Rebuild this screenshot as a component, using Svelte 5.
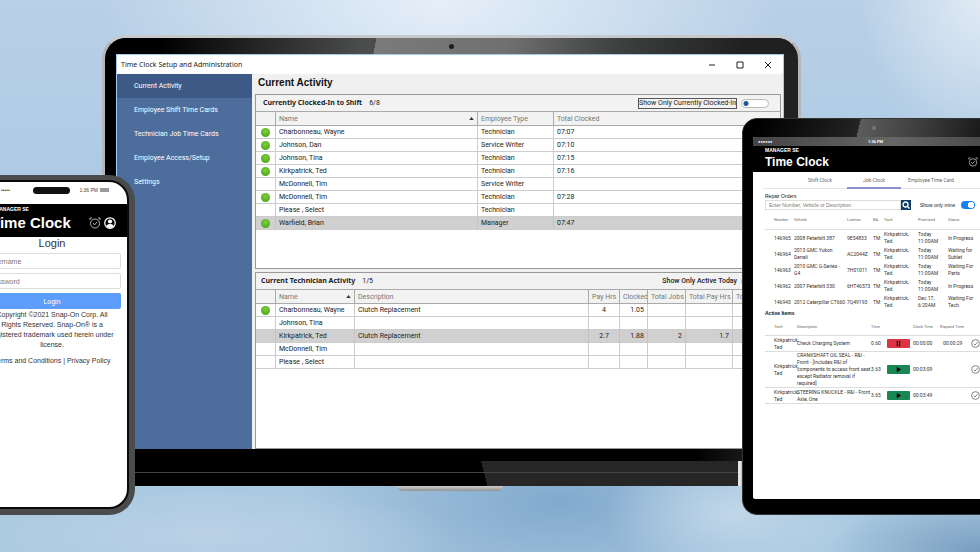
<script>
  const menu = ['Current Activity', 'Employee Shift Time Cards', 'Technician Job Time Cards', 'Employee Access/Setup', 'Settings'];

  const shift = [
    { on: true, name: 'Charbonneau, Wayne', type: 'Technician', total: '07:07' },
    { on: true, name: 'Johnson, Dan', type: 'Service Writer', total: '07:10' },
    { on: true, name: 'Johnson, Tina', type: 'Technician', total: '07:15' },
    { on: true, name: 'Kirkpatrick, Ted', type: 'Technician', total: '07:16' },
    { on: false, name: 'McDonnell, Tim', type: 'Service Writer', total: '' },
    { on: true, name: 'McDonnell, Tim', type: 'Technician', total: '07:28' },
    { on: false, name: 'Please , Select', type: 'Technician', total: '' },
    { on: true, name: 'Warfield, Brian', type: 'Manager', total: '07:47', selected: true }
  ];

  const jobs = [
    { on: true, name: 'Charbonneau, Wayne', desc: 'Clutch Replacement', pay: '4', clocked: '1.05', jobs: '', totalPay: '' },
    { name: 'Johnson, Tina', desc: '', pay: '', clocked: '', jobs: '', totalPay: '' },
    { name: 'Kirkpatrick, Ted', desc: 'Clutch Replacement', pay: '2.7', clocked: '1.88', jobs: '2', totalPay: '1.7', selected: true },
    { name: 'McDonnell, Tim', desc: '', pay: '', clocked: '', jobs: '', totalPay: '' },
    { name: 'Please , Select', desc: '', pay: '', clocked: '', jobs: '', totalPay: '' }
  ];

  const orders = [
    ['146965', ['2008 Peterbilt 387'], '9E54833', ['Today', '11:00AM'], ['In Progress']],
    ['146964', ['2013 GMC Yukon', 'Denali'], 'AC2044Z', ['Today', '11:00AM'], ['Waiting for', 'Sublet']],
    ['146963', ['2010 GMC G-Series -', 'G4'], '7H01011', ['Today', '11:00AM'], ['Waiting For', 'Parts']],
    ['146962', ['2007 Peterbilt 330'], '6HT46573', ['Today', '11:00AM'], ['In Progress']],
    ['146943', ['2012 Caterpillar CT660'], '7Q49193', ['Dec 17,', '6:20AM'], ['Waiting For', 'Tech.']]
  ];

  const items = [
    { desc: ['Check Charging System'], time: '0.60', running: true, clock: '00:00:00', elapsed: '00:00:29' },
    {
      desc: ['CRANKSHAFT OIL SEAL - R&I -', 'Front - [Includes R&I of', 'components to access front seat', 'except Radiator removal if', 'required]'],
      time: '3.63', running: false, clock: '00:03:09', elapsed: ''
    },
    { desc: ['STEERING KNUCKLE - R&I - Front', 'Axle, One'], time: '3.65', running: false, clock: '00:03:49', elapsed: '' }
  ];
</script>

{#snippet lines(list)}
  {#each list as line}<span class="line">{line}</span>{/each}
{/snippet}

{#snippet alarm()}
  <svg class="icon" viewBox="0 0 24 24" fill="none" stroke="#b5b5b5" stroke-width="2" aria-hidden="true">
    <circle cx="12" cy="13" r="9" />
    <path d="M2 6V2h4M22 6V2h-4M8 12l3 4 5-6" />
  </svg>
{/snippet}

{#snippet person()}
  <svg class="icon" viewBox="0 0 24 24" aria-hidden="true">
    <circle cx="12" cy="12" r="10.5" fill="#000" stroke="#fff" stroke-width="2.5" />
    <circle cx="12" cy="9" r="4.2" fill="#fff" />
    <path d="M4.5 18.5C6 14.5 9 14 12 14s6 .5 7.500 4.500A10 10 0 0 1 4.500 18.500Z" fill="#fff" />
  </svg>
{/snippet}

{#snippet sortArrow()}
  <svg class="arrow" viewBox="0 0 6 4" aria-hidden="true"><path d="M3 0l3 4H0z" fill="#333" /></svg>
{/snippet}

<main class="stage">
  <section class="laptop">
    <div class="lid">
      <div class="bezel"><span class="camera"></span></div>
      <div class="window">
        <header class="titlebar">
          <span>Time Clock Setup and Administration</span>
          <div class="controls">
            <button aria-label="Minimize"><svg viewBox="0 0 10 10"><path d="M2 5h6" /></svg></button>
            <button aria-label="Maximize"><svg viewBox="0 0 10 10"><path d="M2 2h6v6H2z" /></svg></button>
            <button aria-label="Close"><svg viewBox="0 0 10 10"><path d="M2 2l6 6M8 2l-6 6" /></svg></button>
          </div>
        </header>
        <div class="body">
          <nav class="sidebar">
            {#each menu as item, i}
              <a href="#menu-{i}" class:active={i === 0}>{item}</a>
            {/each}
          </nav>
          <div class="content">
            <h1>Current Activity</h1>
            <section class="panel">
              <header>
                <h2>Currently Clocked-In to Shift</h2>
                <span>6/8</span>
                <label class="boxed" for="only-clocked">Show Only Currently Clocked-In</label>
                <input id="only-clocked" class="switch" type="checkbox" />
              </header>
              <table class="grid">
                <colgroup><col class="c-dot" /><col /><col class="c-type" /><col class="c-total" /></colgroup>
                <thead>
                  <tr><th></th><th><div class="sort">Name {@render sortArrow()}</div></th><th>Employee Type</th><th>Total Clocked</th></tr>
                </thead>
                <tbody>
                  {#each shift as row}
                    <tr class:selected={row.selected}>
                      <td>{#if row.on}<span class="dot"></span>{/if}</td>
                      <td>{row.name}</td><td>{row.type}</td><td>{row.total}</td>
                    </tr>
                  {/each}
                </tbody>
              </table>
            </section>
            <section class="panel second">
              <header>
                <h2>Current Technician Activity</h2>
                <span>1/5</span>
                <label class="today" for="only-active">Show Only Active Today</label>
                <input id="only-active" class="switch" type="checkbox" />
              </header>
              <table class="grid">
                <colgroup>
                  <col class="c-dot" /><col class="c-name" /><col /><col class="c-pay" /><col class="c-clocked" /><col class="c-jobs" /><col class="c-tpay" /><col class="c-rest" />
                </colgroup>
                <thead>
                  <tr>
                    <th></th><th><div class="sort">Name {@render sortArrow()}</div></th><th>Description</th><th>Pay Hrs</th><th>Clocked</th><th>Total Jobs</th><th>Total Pay Hrs</th><th>Total</th>
                  </tr>
                </thead>
                <tbody>
                  {#each jobs as row}
                    <tr class:selected={row.selected}>
                      <td>{#if row.on}<span class="dot"></span>{/if}</td>
                      <td>{row.name}</td><td>{row.desc}</td>
                      <td class="mid">{row.pay}</td><td class="num">{row.clocked}</td><td class="num">{row.jobs}</td><td class="num">{row.totalPay}</td><td></td>
                    </tr>
                  {/each}
                </tbody>
              </table>
            </section>
          </div>
        </div>
      </div>
    </div>
    <div class="base"></div>
    <div class="notch"></div>
  </section>

  <section class="phone">
    <div class="phone-screen">
      <div class="phone-status">
        <span class="signal">•••••</span>
        <span class="speaker"></span>
        <span class="clock">1:36 PM <i></i></span>
      </div>
      <header class="phone-head">
        <small>MANAGER SE</small>
        <div><strong>Time Clock</strong>{@render alarm()}{@render person()}</div>
      </header>
      <form class="login">
        <h2>Login</h2>
        <input type="text" placeholder="Username" aria-label="Username" />
        <input type="password" placeholder="Password" aria-label="Password" />
        <button type="button">Login</button>
        <p>Copyright ©2021 Snap-On Corp. All<br />Rights Reserved. Snap-On® is a<br />registered trademark used herein under<br />license.</p>
        <p class="legal"><a href="#terms">Terms and Conditions</a> | <a href="#privacy">Privacy Policy</a></p>
      </form>
    </div>
  </section>

  <section class="tablet">
    <div class="tablet-bezel"><span></span></div>
    <div class="tablet-screen">
      <div class="tablet-status"><span>●●●●●●</span><span>1:36 PM</span><span></span></div>
      <header class="tablet-head">
        <small>MANAGER SE</small>
        <div><strong>Time Clock</strong>{@render alarm()}{@render person()}</div>
      </header>
      <div class="sheet">
        <nav class="tabs">
          <a href="#shift">Shift Clock</a><a class="active" href="#job">Job Clock</a><a href="#card">Employee Time Card</a>
        </nav>
        <label class="caption" for="search">Repair Orders</label>
        <div class="search">
          <input id="search" type="text" placeholder="Enter Number, Vehicle or Description" />
          <button aria-label="Search"><svg viewBox="0 0 10 10" fill="none" stroke="#fff" stroke-width="1.300"><circle cx="4.500" cy="4.500" r="2.500" /><path d="M6.300 6.300l2.200 2.200" /></svg></button>
          <label for="mine">Show only mine</label>
          <input id="mine" class="toggle" type="checkbox" checked />
        </div>
        <table class="orders">
          <colgroup><col class="o1" /><col class="o2" /><col class="o3" /><col class="o4" /><col class="o5" /><col class="o6" /><col /></colgroup>
          <thead><tr><th>Number</th><th>Vehicle</th><th>License</th><th>BA</th><th>Tech</th><th>Promised</th><th>Status</th></tr></thead>
          <tbody>
            {#each orders as [number, vehicle, license, promised, status]}
              <tr>
                <td>{number}</td><td>{@render lines(vehicle)}</td><td>{license}</td><td>TM</td>
                <td>{@render lines(['Kirkpatrick,', 'Ted'])}</td><td>{@render lines(promised)}</td><td>{@render lines(status)}</td>
              </tr>
            {/each}
          </tbody>
        </table>
        <h3 class="caption bold">Active Items</h3>
        <table class="active-items">
          <colgroup><col class="a1" /><col class="a2" /><col class="a3" /><col class="a4" /><col class="a5" /><col class="a6" /><col /></colgroup>
          <thead><tr><th>Tech</th><th>Description</th><th>Time</th><th></th><th>Clock Time</th><th>Elapsed Time</th><th></th></tr></thead>
          <tbody>
            {#each items as item}
              <tr>
                <td>{@render lines(['Kirkpatrick,', 'Ted'])}</td>
                <td>{@render lines(item.desc)}</td>
                <td>{item.time}</td>
                <td>
                  <button class="action" class:pause={item.running} aria-label={item.running ? 'Pause' : 'Start'}>
                    <svg viewBox="0 0 8 8"><path d={item.running ? 'M2 1h1.500v6H2zM4.500 1H6v6H4.500z' : 'M2 1l5 3-5 3z'} /></svg>
                  </button>
                </td>
                <td>{item.clock}</td>
                <td class="elapsed">{item.elapsed}</td>
                <td>
                  <button class="done" aria-label="Complete"><svg viewBox="0 0 10 10" fill="none" stroke="#555" stroke-width=".8"><circle cx="5" cy="5" r="4.300" /><path d="M3 5.200l1.500 1.500L7.300 3.500" /></svg></button>
                </td>
              </tr>
            {/each}
          </tbody>
        </table>
      </div>
    </div>
  </section>
</main>

<style>
  :global(body) { margin: 0; }
  * { box-sizing: border-box; }
  h1, h2, h3, p { margin: 0; }
  a { color: inherit; text-decoration: none; }
  button { padding: 0; border: 0; background: none; font: inherit; color: inherit; display: block; }
  input { font: inherit; margin: 0; }
  svg { display: block; }
  table { border-collapse: separate; border-spacing: 0; table-layout: fixed; width: 100%; }
  th { font-weight: normal; text-align: left; }
  td, th { padding: 0; white-space: nowrap; }

  .stage {
    position: relative;
    min-height: 100vh;
    overflow: hidden;
    padding: 35px 179px 0 102px;
    background:
      radial-gradient(ellipse 340px 170px at 45% 0, #e6eff9 0, #e6eff900 100%),
      radial-gradient(ellipse 120px 150px at 100% 0, #e0eaf4 0, #e0eaf400 100%),
      radial-gradient(ellipse 130px 70px at 75% 93%, #c1d7e9 0, #c1d7e900 100%),
      radial-gradient(ellipse 260px 50px at 21% 97%, #bbd1e6 0, #bbd1e600 100%),
      radial-gradient(ellipse 260px 110px at 57% 91%, #82a9cd 0, #82a9cd00 100%),
      radial-gradient(ellipse 150px 60px at 100% 100%, #789dc0 0, #789dc000 100%),
      linear-gradient(180deg, #b9d0e7 0, #a9c9e2 45%, #a9c9e0 100%);
    font-family: "Liberation Sans", Arial, sans-serif;
  }

  /* laptop */
  .laptop { font-family: Roboto, "Liberation Sans", sans-serif; font-size: 7px; color: #222; }
  .lid {
    padding: 0 14px 12px 11px;
    border: 3px solid #b4b6b9;
    border-bottom: 0;
    border-top-color: #c6c9cc;
    border-radius: 24px 24px 0 0;
    background: linear-gradient(90deg, #000 0, #000 85%, #222 95%);
    overflow: hidden;
  }
  .bezel {
    height: 16px;
    margin: 0 -14px 0 -11px;
    display: flex;
    justify-content: center;
    align-items: center;
    background: linear-gradient(102deg, #000 8%, #4b4d4c 37%, #4b4d4c 39%, #7a7a7a 39%, #707070 58%, #3c403e 74%, #202020 92%);
  }
  .camera { width: 5px; height: 5px; border-radius: 50%; background: #1d1d1d; }
  .window { background: #f0f0f0; border: 1px solid #a5caf0; border-bottom: 0; }
  .titlebar { height: 19px; padding: 0 10px 0 4px; display: flex; align-items: center; justify-content: space-between; background: #fff; font-family: "Noto Sans", sans-serif; }
  .controls { display: flex; gap: 18px; }
  .controls svg { width: 10px; height: 10px; fill: none; stroke: #222; stroke-width: 1; }
  .body { display: flex; }
  .sidebar { width: 135px; flex: none; background: #4d6d9c; color: #fff; }
  .sidebar a { display: block; height: 24px; line-height: 24px; padding-left: 17px; }
  .sidebar a.active { background: #3d5a87; }
  .content { flex: 1; min-width: 0; padding: 0 2px 0 3px; }
  h1 { height: 20px; padding-left: 3px; font: bold 10px/18px "Liberation Sans", Arial, sans-serif; color: #111; }
  .panel { min-height: 175px; border: 1px solid #999; background: #fff; }
  .panel.second { margin-top: 3px; min-height: 177px; }
  .panel header { height: 16px; padding: 0 11px 0 7px; display: flex; align-items: center; gap: 7px; background: #f2f2f2; }
  .panel.second header { padding: 0 11px 0 5px; }
  .panel h2 { font: bold 7px/10px "Noto Sans", sans-serif; }
  .boxed { margin-left: auto; line-height: 9px; border: 1px solid #555; }
  .today { margin-left: auto; font-weight: 500; }
  .switch {
    appearance: none;
    width: 28px;
    height: 9px;
    margin-left: -3px;
    border: 1px solid #bbb;
    border-radius: 5px;
    background: radial-gradient(circle at 4px 50%, #24549a 0 2px, #fff 3px);
  }
  .grid th, .grid td { height: 13px; line-height: 12px; padding: 0 3px; border-right: 1px solid #ccc; border-bottom: 1px solid #ccc; overflow: hidden; }
  .grid th { height: 15px; background: #f2f2f2; color: #777; border-top: 1px solid #aaa; border-color: #aaa; }
  .grid th:first-child, .grid td:first-child { padding: 0; }
  .grid th:last-child, .grid td:last-child { border-right: 0; }
  .sort { display: flex; align-items: center; justify-content: space-between; }
  .arrow { width: 5px; height: 3px; }
  .dot { display: block; width: 9px; height: 9px; margin: 0 auto; border-radius: 50%; background: radial-gradient(circle at 50% 35%, #7fd03c, #4ba81c 80%); }
  .grid .selected td { background: #d0d0d0; border-right-color: #c4c4c4; }
  .grid .mid { text-align: center; }
  .grid .num { text-align: right; }
  .c-dot { width: 20px; }
  .c-type { width: 76px; }
  .c-total { width: 226px; }
  .c-name { width: 79px; }
  .c-pay { width: 31px; }
  .c-clocked { width: 28px; }
  .c-jobs { width: 38px; }
  .c-tpay { width: 47px; }
  .c-rest { width: 47px; }
  .base {
    height: 25px;
    margin-right: 60px;
    border-right: 3px solid #e4e4e8;
    background:
      linear-gradient(#444, #444) 0 11px / 100% 1px no-repeat,
      linear-gradient(75deg, #000 60%, #262626 60%);
  }
  .notch { width: 106px; height: 5px; margin-left: 295px; border-radius: 0 0 9px 9px; background: linear-gradient(#d0ccca, #8f9194); }

  /* phone */
  .phone { position: absolute; left: -31px; top: 175px; width: 166px; padding: 5px 6px 6px; border-radius: 26px; background: #4a4b4c; }
  .phone-screen { min-height: 329px; border: 2px solid #0a0a0a; border-radius: 20px; overflow: hidden; background: #fff; color: #333; }
  .phone-status { height: 22px; padding: 0 18px 6px 24px; display: flex; align-items: center; font-size: 5px; color: #444; }
  .signal { width: 32px; }
  .speaker { width: 37px; height: 7px; border-radius: 4px; background: #111; }
  .clock { margin-left: auto; display: flex; align-items: center; gap: 2px; white-space: nowrap; }
  .clock i { width: 9px; height: 4px; background: #999; }
  .phone-head { height: 33px; padding: 2px 11px 0 14px; background: #000; color: #fff; }
  .phone-head small { display: block; padding-left: 4px; font-size: 5px; font-weight: bold; line-height: 6px; }
  .phone-head div { display: flex; align-items: center; gap: 3px; }
  .phone-head strong { flex: 1; font-size: 15px; line-height: 22px; white-space: nowrap; }
  .phone-head .icon { width: 12px; height: 12px; }
  .login { padding: 0 6px; display: grid; gap: 4px; text-align: center; font-size: 7px; }
  .login h2 { font-size: 11px; font-weight: 500; line-height: 12px; }
  .login input { width: 100%; height: 16px; padding: 0 5px; border: 1px solid #ddd; border-radius: 2px; background: #fff; }
  .login input::placeholder { color: #777; }
  .login button { height: 16px; border-radius: 2px; background: #5d9dfc; color: #fff; }
  .login p { margin: -3px -6px 0; line-height: 10px; white-space: nowrap; }
  .login .legal { margin-top: 2px; }

  /* tablet */
  .tablet { position: absolute; right: -62px; top: 118px; width: 300px; padding: 0 10px 15px; border: 1px solid #333; border-radius: 15px; background: #000; overflow: hidden; }
  .tablet-bezel { height: 18px; margin: 0 -10px; display: flex; align-items: center; padding-left: 129px; background: linear-gradient(104deg, #000 5%, #222 38%, #2a2a2a 39%, #5c5c5c 39%, #3c3c3c 60%, #111 85%); }
  .tablet-bezel span { width: 4px; height: 4px; border-radius: 50%; background: #777; }
  .tablet-screen { min-height: 362px; background: #fff; color: #333; border-radius: 2px; overflow: hidden; font-size: 5px; line-height: 7px; font-family: Roboto, "Liberation Sans", sans-serif; }
  .tablet-status { height: 9px; padding: 0 5px; display: grid; grid-template-columns: 110px 1fr 10px; align-items: center; background: linear-gradient(90deg, #444, #666 50%, #3c3c3c); color: #fff; font-size: 4px; font-weight: bold; }
  .tablet-head { height: 26px; padding: 1px 0 0 12px; background: #000; color: #fff; font-family: "Liberation Sans", Arial, sans-serif; }
  .tablet-head small { display: block; font-size: 5px; line-height: 6px; font-weight: bold; }
  .tablet-head div { display: flex; align-items: center; gap: 3px; }
  .tablet-head strong { width: 200px; font-size: 12px; line-height: 18px; }
  .tablet-head .icon { width: 10px; height: 10px; }
  .sheet { padding: 0 0 0 12px; }
  .tabs { display: flex; height: 17px; margin-left: -2px; padding-left: 30px; border-bottom: 1px solid #e4e4e4; }
  .tabs a { width: 54px; height: 17px; line-height: 16px; text-align: center; color: #666; }
  .tabs a:last-child { width: 60px; }
  .tabs a.active { border-bottom: 2px solid #8a92cf; }
  .caption { display: block; margin-top: 4px; font: 500 5px/7px "Liberation Sans", Arial, sans-serif; color: #111; }
  .search { display: flex; align-items: center; color: #222; font-family: "Liberation Sans", Arial, sans-serif; }
  .search input[type='text'] { width: 136px; height: 10px; padding: 0 3px; border: 1px solid #ddd; }
  .search input::placeholder { color: #777; }
  .search button { width: 10px; height: 10px; background: #103d68; }
  .search label { width: 38px; margin: 0 3px 0 9px; white-space: nowrap; }
  .toggle { appearance: none; width: 14px; height: 8px; border-radius: 4px; background: radial-gradient(circle at 10px 50%, #fff 0 3px, #1681f5 3px); }
  .line { display: block; }
  .orders th, .active-items th { font-size: 4px; color: #666; border-bottom: 1px solid #ddd; }
  .orders th { height: 20px; }
  .orders td { height: 16px; }
  .orders th:first-child, .orders td:first-child, .active-items th:first-child, .active-items td:first-child { padding-left: 9px; }
  .o1 { width: 29px; }
  .o2 { width: 53px; }
  .o3 { width: 26px; }
  .o4 { width: 11px; }
  .o5 { width: 34px; }
  .o6 { width: 30px; }
  .caption.bold { margin-top: 0; font-weight: bold; }
  .active-items th { height: 19px; }
  .active-items td { height: 16px; border-bottom: 1px solid #ddd; }
  .a1 { width: 32px; }
  .a2 { width: 74px; }
  .a3 { width: 16px; }
  .a4 { width: 26px; }
  .a5 { width: 27px; }
  .a6 { width: 31px; }
  .action { width: 23px; height: 9px; border-radius: 1px; background: #198754; }
  .action.pause { background: #dc3545; }
  .action svg { width: 7px; height: 7px; margin: 0 auto; }
  .active-items .elapsed { padding-left: 3px; }
  .done svg { width: 9px; height: 9px; }
</style>
